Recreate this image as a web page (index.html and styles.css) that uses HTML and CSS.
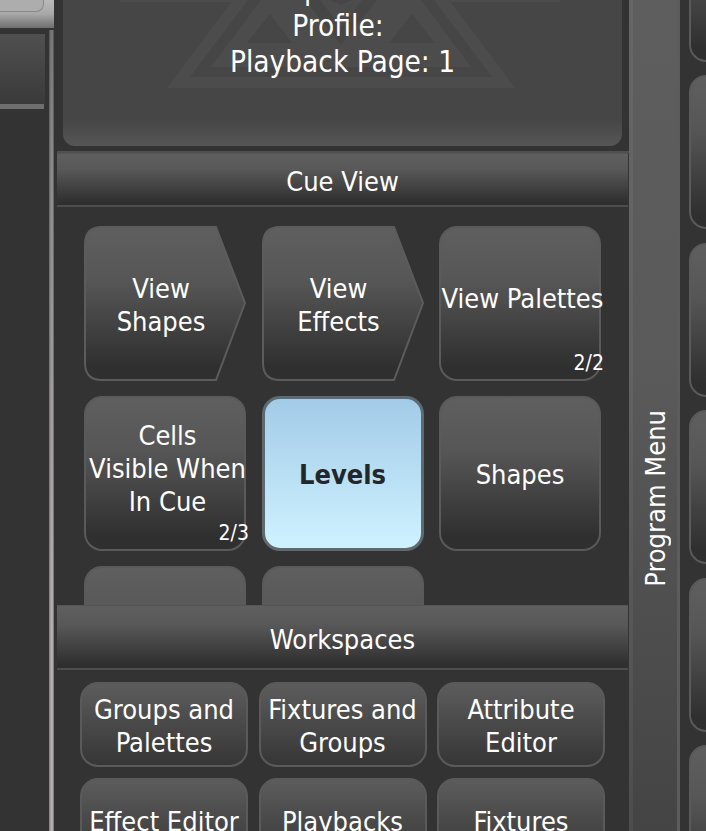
FILE: index.html
```html
<!DOCTYPE html>
<html lang="en">
<head>
<meta charset="utf-8">
<title>Cue View</title>
<link rel="stylesheet" href="styles.css">
</head>
<body>
<div class="app">
  <aside class="left">
    <div class="left-top"><div class="left-key"></div></div>
    <div class="left-lower">
      <div class="left-col">
        <div class="left-block"></div>
        <div class="left-line"></div>
      </div>
      <div class="rail"></div>
    </div>
  </aside>
  <main class="main">
    <section class="info-wrap">
      <div class="info">
        <svg class="logo" viewBox="63 0 559 146" aria-hidden="true">
          <path class="logo-tri" d="M120 0 H233 L234 2 H120 Z M449 0 H560 V2 H450 Z"/>
          <path class="logo-tri" d="M167 88 L233 0 H248 L190 77 H492 L434 0 H449 L515 88 Z"/>
          <path class="logo-tri" fill-rule="evenodd" d="M211 67 L261 0 H330 L341 5 L352 0 H421 L471 67 Z M270 14 L247 43 H292 Z M412 14 L389 43 H435 Z"/>
          <path class="logo-cut" d="M305 0 L341 45 L377 0 H362 L341 27 L320 0 Z"/>
        </svg>
        <div class="info-text">
          <div>Operator</div>
          <div class="info-profile">Profile:</div>
          <div>Playback Page: 1</div>
        </div>
      </div>
    </section>
    <section class="panel cue">
      <header class="head cue-head">Cue View</header>
      <div class="cue-body">
        <div class="btn arrow">
          <svg class="arrow-bg" viewBox="0 0 162 155" aria-hidden="true">
            <defs><linearGradient id="ag" x1="0" y1="0" x2="0" y2="1"><stop offset="0" stop-color="#5f5f5f"/><stop offset=".35" stop-color="#565656"/><stop offset=".92" stop-color="#2f2f2f"/><stop offset="1" stop-color="#303030"/></linearGradient></defs>
            <path d="M18 1 H132 L161 77 L132 154 H18 Q1 154 1 137 V18 Q1 1 18 1 Z" fill="url(#ag)" stroke="#5c5c5c" stroke-width="2"/>
          </svg>
          <span class="arrow-label">View<br>Shapes</span>
        </div>
        <div class="btn arrow">
          <svg class="arrow-bg" viewBox="0 0 162 155" aria-hidden="true">
            <path d="M18 1 H132 L161 77 L132 154 H18 Q1 154 1 137 V18 Q1 1 18 1 Z" fill="url(#ag)" stroke="#5c5c5c" stroke-width="2"/>
          </svg>
          <span class="arrow-label">View<br>Effects</span>
        </div>
        <div class="btn grad"><span class="wide">View Palettes</span><span class="count">2/2</span></div>
        <div class="btn grad"><span class="wide">Cells<br>Visible When<br>In Cue</span><span class="count">2/3</span></div>
        <div class="btn active">Levels</div>
        <div class="btn grad">Shapes</div>
        <div class="btn grad"></div>
        <div class="btn grad"></div>
      </div>
    </section>
    <section class="panel work">
      <header class="head work-head">Workspaces</header>
      <div class="work-body">
        <div class="btn wbtn">Groups and<br>Palettes</div>
        <div class="btn wbtn">Fixtures and<br>Groups</div>
        <div class="btn wbtn">Attribute<br>Editor</div>
        <div class="btn wbtn">Effect Editor</div>
        <div class="btn wbtn">Playbacks</div>
        <div class="btn wbtn">Fixtures</div>
      </div>
    </section>
  </main>
  <nav class="program"><span>Program Menu</span></nav>
  <aside class="right">
    <div class="rbtn"></div>
    <div class="rbtn"></div>
    <div class="rbtn"></div>
    <div class="rbtn"></div>
    <div class="rbtn"></div>
    <div class="rbtn"></div>
  </aside>
</div>
</body>
</html>
```
FILE: styles.css
```css
* { box-sizing: border-box; }
html, body { margin: 0; height: 100%; background: #333; overflow: hidden; }
body { font-family: "DejaVu Sans Condensed", "DejaVu Sans", sans-serif; font-stretch: condensed; color: #fff; }
.app { display: flex; width: 706px; height: 831px; overflow: hidden; background: #333; }

.left { width: 57px; flex: none; display: flex; flex-direction: column; padding-right: 3px; }
.left-top { flex: none; height: 28px; background: linear-gradient(#b9b9b9, #a8a8a8 50%, #6e6e6e); overflow: hidden; }
.left-key { width: 44px; height: 12px; border: 1px solid #8a8a8a; border-top: 0; border-left: 0; border-radius: 0 0 8px 0; background: #adadad; }
.left-lower { flex: 1; display: flex; padding-top: 2px; }
.left-col { width: 49px; flex: none; padding-top: 4px; }
.left-block { width: 45px; height: 70px; background: linear-gradient(#505050, #3a3a3a); }
.left-line { width: 44px; height: 5px; background: #6e6e6e; }
.rail { flex: 1; background: linear-gradient(90deg, rgba(0, 0, 0, .3), transparent 40%, transparent 70%, rgba(0, 0, 0, .4)), linear-gradient(#777, #8d8d8d 20%, #b5adad 75%); }

.main { width: 573px; flex: none; display: flex; flex-direction: column; }
.info-wrap { height: 153px; flex: none; padding: 0 8px 0 6px; border-bottom: 2px solid #505050; }
.info { position: relative; height: 146px; border-radius: 0 0 12px 12px; background: linear-gradient(#464646 82%, #565656); overflow: hidden; display: flex; justify-content: center; align-items: flex-start; }
.logo { position: absolute; left: 0; top: 0; width: 559px; height: 146px; }
.logo-tri { fill: #4c4c4c; }
.logo-cut { fill: #464646; }
.info-text { position: relative; margin-top: -28px; text-align: center; font-size: 29.5px; line-height: 36px; }
.info-profile { padding-right: 9px; }

.panel { display: flex; flex-direction: column; }
.head { flex: none; margin-right: 2px; text-align: center; font-size: 27px; background: linear-gradient(#5f5f5f, #585858 30%, #2f2f2f 95%); border-bottom: 2px solid #4d4d4d; border-top: 1px solid #555; }
.cue { height: 452px; flex: none; overflow: hidden; }
.cue-head { height: 54px; line-height: 55px; }
.cue-body { display: grid; grid-template-columns: repeat(3, 162px); grid-auto-rows: 155px; column-gap: 15.5px; row-gap: 15px; padding: 19px 0 0 27px; }
.btn { position: relative; display: flex; align-items: center; justify-content: center; text-align: center; font-size: 27px; line-height: 33px; border-radius: 18px; padding-top: 2px; }
.grad { border: 2px solid #5a5a5a; background: linear-gradient(#5f5f5f, #565656 35%, #2f2f2f 92%, #303030); }
.wide { white-space: nowrap; margin: 0 -9px 12px -4px; }
.arrow-bg { position: absolute; inset: 0; width: 162px; height: 155px; }
.arrow-label { position: relative; margin-right: 8px; }
.count { position: absolute; right: -5px; bottom: 3px; font-size: 21px; line-height: 26px; }
.active { border: 3px solid #5f6a70; background: linear-gradient(#a2cbe8, #cff2ff); color: #23262b; font-weight: 700; }

.work { flex: 1; min-height: 0; background: #333; }
.work-head { height: 65px; line-height: 67px; }
.work-body { display: grid; grid-template-columns: repeat(3, 168px); grid-auto-rows: 85px; column-gap: 10.5px; row-gap: 11px; padding: 12px 0 0 23px; }
.wbtn { border: 2px solid #5a5a5a; background: linear-gradient(#5c5c5c, #363636); }

.program { width: 51px; flex: none; display: flex; align-items: center; justify-content: center; background: linear-gradient(#5e5e5e, #5a5a5a 45%, #444); border-left: 4px solid rgba(255, 255, 255, .05); border-right: 3px solid #5c5c5c; height: 100%; margin-left: -1px; }
.program span { writing-mode: vertical-rl; transform: rotate(180deg); font-size: 27px; white-space: nowrap; margin-top: 166px; }

.right { flex: 1; display: flex; flex-direction: column; gap: 13.5px; padding-left: 9px; margin-top: -92.5px; }
.rbtn { flex: none; height: 154px; border: 2px solid #5a5a5a; border-right: 0; border-radius: 18px 0 0 18px; background: linear-gradient(#5f5f5f, #565656 35%, #2f2f2f 92%); }
```
